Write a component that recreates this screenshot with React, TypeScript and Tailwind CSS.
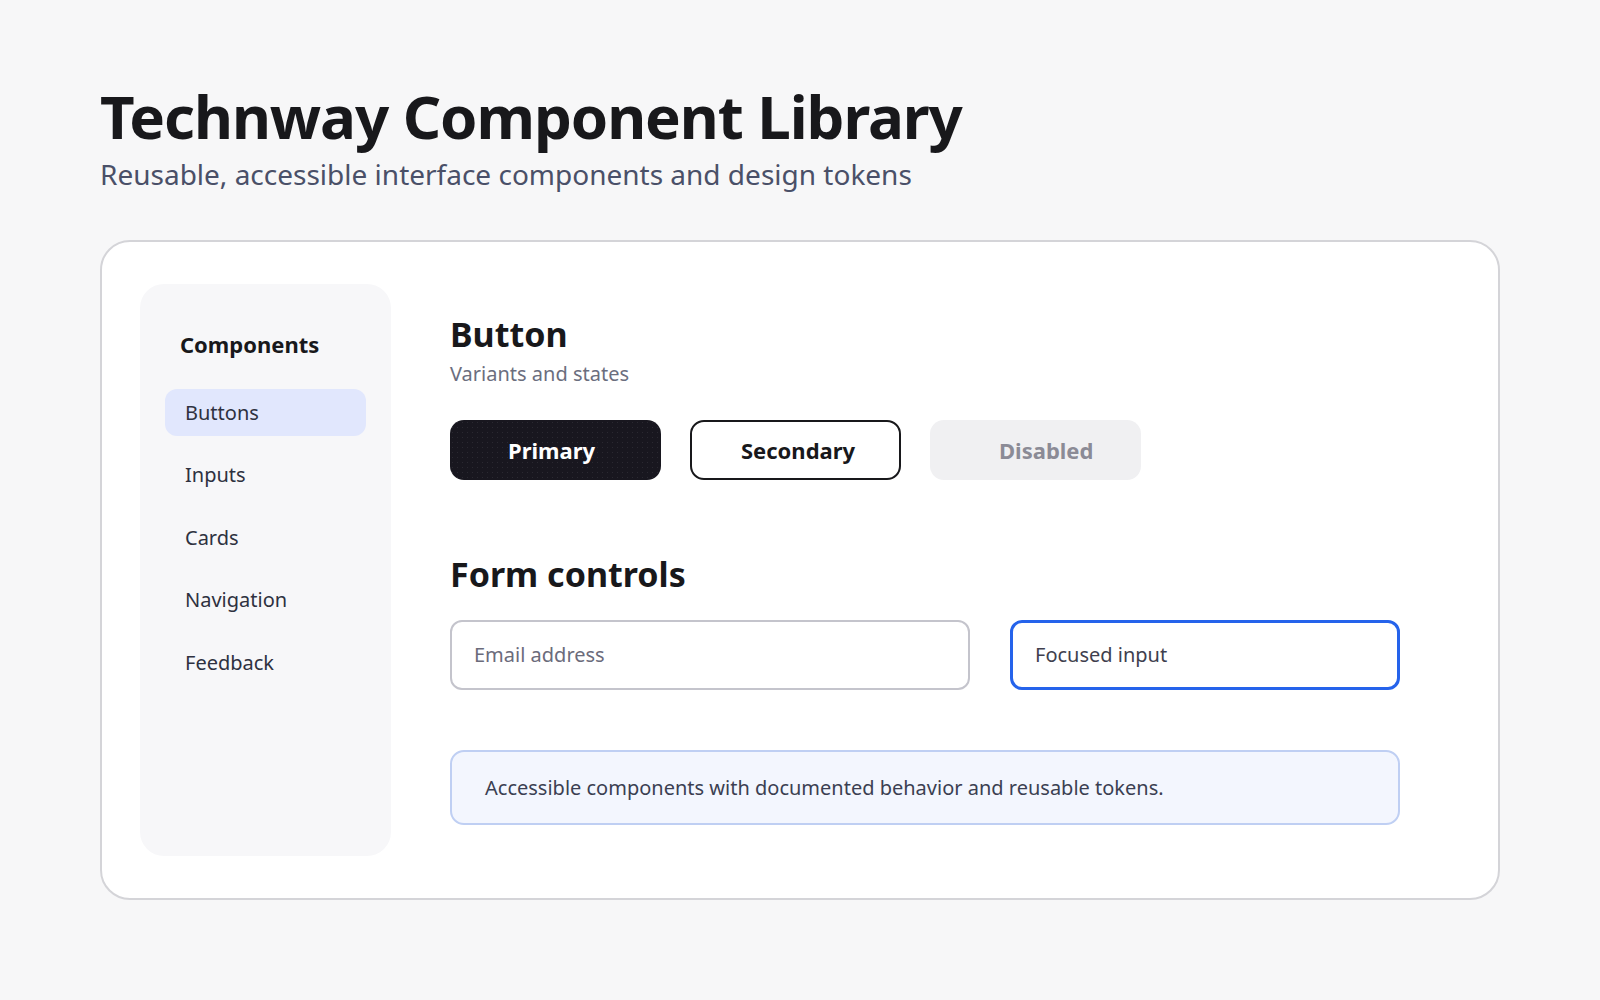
import React from "react";

const items = ["Buttons", "Inputs", "Cards", "Navigation", "Feedback"];

export default function App() {
  return (
    <div
      className="min-h-screen w-full bg-[#f7f7f8] px-[100px] pt-[78px] text-[#18181b]"
      style={{ fontFamily: '"Noto Sans", "Open Sans", sans-serif' }}
    >
      <h1 className="text-[60px] font-bold leading-[76px] tracking-[-0.018em] text-[#18181b]">
        Technway Component Library
      </h1>
      <p className="mt-[2px] text-[28px] leading-[36px] text-[#4a5068]">
        Reusable, accessible interface components and design tokens
      </p>

      <div className="mt-[48px] box-border flex h-[660px] w-[1400px] gap-[59px] rounded-[30px] border-2 border-[#d4d4d8] bg-white px-[38px] py-[42px]">
        <aside className="box-border flex w-[251px] shrink-0 flex-col rounded-[24px] bg-[#f7f7f9] px-[25px] pt-[45px]">
          <div className="flex h-[30px] items-center pl-[15px] text-[22px] font-bold text-[#18181b]">
            Components
          </div>
          <nav className="mt-[30px] flex flex-col gap-[15.5px]">
            {items.map((it, i) => (
              <div
                key={it}
                className={
                  i === 0
                    ? "flex h-[47px] items-center rounded-[12px] bg-[#e1e7fd] pl-[20px] text-[20px] text-[#2e3140]"
                    : "flex h-[47px] items-center rounded-[12px] pl-[20px] text-[20px] text-[#2e3140]"
                }
              >
                {it}
              </div>
            ))}
          </nav>
        </aside>

        <main className="flex w-[950px] flex-col pt-[29px]">
          <h2 className="text-[34px] font-bold leading-[42px] text-[#18181b]">Button</h2>
          <p className="mt-[6px] text-[20px] leading-[26px] text-[#6b6e7e]">Variants and states</p>

          <div className="mt-[33px] flex gap-[29px]">
            <button className="box-border flex h-[60px] w-[211px] items-center justify-start rounded-[14px] bg-[#18171f] bg-[radial-gradient(circle,rgba(255,255,255,0.08)_0.8px,transparent_1px)] bg-[length:5px_5px] pl-[58px] text-[22px] font-bold text-white">
              Primary
            </button>
            <button className="box-border flex h-[60px] w-[211px] items-center justify-start rounded-[14px] border-2 border-[#18181b] bg-white pl-[49px] text-[22px] font-bold text-[#18181b]">
              Secondary
            </button>
            <button className="box-border flex h-[60px] w-[211px] items-center justify-start rounded-[14px] bg-[#f0f0f2] pl-[69px] text-[22px] font-bold text-[#8b8b96]">
              Disabled
            </button>
          </div>

          <h2 className="mt-[73px] text-[34px] font-bold leading-[42px] text-[#18181b]">Form controls</h2>

          <div className="mt-[25px] flex gap-[40px]">
            <div className="box-border flex h-[70px] w-[520px] items-center rounded-[12px] border-2 border-[#c4c4cc] bg-white px-[22px] text-[20px] text-[#6b6b7b]">
              Email address
            </div>
            <div className="box-border flex h-[70px] w-[390px] items-center rounded-[12px] border-[3px] border-[#2563eb] bg-white px-[22px] text-[20px] text-[#3f3f4e]">
              Focused input
            </div>
          </div>

          <div className="mt-[60px] box-border flex h-[75px] w-[950px] items-center rounded-[14px] border-2 border-[#bfcff3] bg-[#f3f6fe] px-[33px] text-[20px] text-[#3b3f52]">
            Accessible components with documented behavior and reusable tokens.
          </div>
        </main>
      </div>
    </div>
  );
}
